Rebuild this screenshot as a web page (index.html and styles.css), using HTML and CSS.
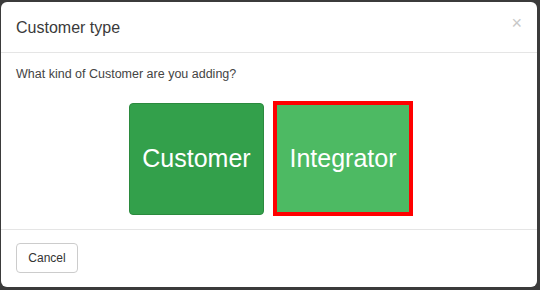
FILE: index.html
```html
<!DOCTYPE html>
<html lang="en">
<head>
    <meta charset="UTF-8">
    <meta name="viewport" content="width=device-width, initial-scale=1.0">
    <title>Customer type</title>
    <link rel="stylesheet" href="styles.css">
</head>
<body>

<div class="modal">
    <div class="modal-header">
        <h4 class="modal-title">Customer type</h4>
        <button class="close" type="button">&times;</button>
    </div>
    <div class="modal-body">
        <p>What kind of Customer are you adding?</p>
        <div class="choices">
            <button class="choice" type="button">Customer</button>
            <button class="choice selected" type="button">Integrator</button>
        </div>
    </div>
    <div class="modal-footer">
        <button class="btn" type="button">Cancel</button>
    </div>
</div>

</body>
</html>
```

FILE: styles.css
```css
body {
    font-family: "Liberation Sans", Arial, sans-serif;
    margin: 0;
    background-color: #3b3b3b;
    color: #333;
}
.modal {
    background: #fff;
    margin: 2px 3px 3px 1px;
    border-radius: 6px;
    overflow: hidden;
}
.modal-header {
    display: flex;
    justify-content: space-between;
    align-items: flex-start;
    padding: 15px 15px 14px 15px;
    border-bottom: 1px solid #e5e5e5;
}
.modal-title {
    margin: 0;
    font-size: 16px;
    font-weight: normal;
    line-height: 21px;
    color: #3a3a3a;
}
.close {
    border: none;
    background: none;
    padding: 0;
    margin: -4px 0 0 0;
    font-size: 18px;
    line-height: 20px;
    color: #c8c8c8;
    cursor: pointer;
}
.modal-body {
    padding: 13px 15px 13px;
    border-bottom: 1px solid #e5e5e5;
}
.modal-body p {
    margin: 0 0 18px;
    font-size: 12.5px;
    line-height: 17px;
    color: #444;
}
.choices {
    display: flex;
    justify-content: center;
    align-items: center;
    gap: 9px;
    padding-left: 4px;
}
.choice {
    font-family: "Liberation Sans", Arial, sans-serif;
    width: 135px;
    height: 112px;
    border: 1px solid #2b8a3e;
    border-radius: 4px;
    background: #33a04b;
    color: #fff;
    font-size: 25px;
    cursor: pointer;
}
.choice.selected {
    width: 140px;
    height: 115px;
    border: 4px solid #ff0000;
    border-radius: 0;
    background: #4dba63;
}
.modal-footer {
    padding: 13px 15px 14px;
}
.btn {
    font-family: "Liberation Sans", Arial, sans-serif;
    width: 62px;
    height: 30px;
    padding: 0;
    font-size: 12px;
    color: #333;
    background: #fff;
    border: 1px solid #ccc;
    border-radius: 4px;
    cursor: pointer;
}
```
